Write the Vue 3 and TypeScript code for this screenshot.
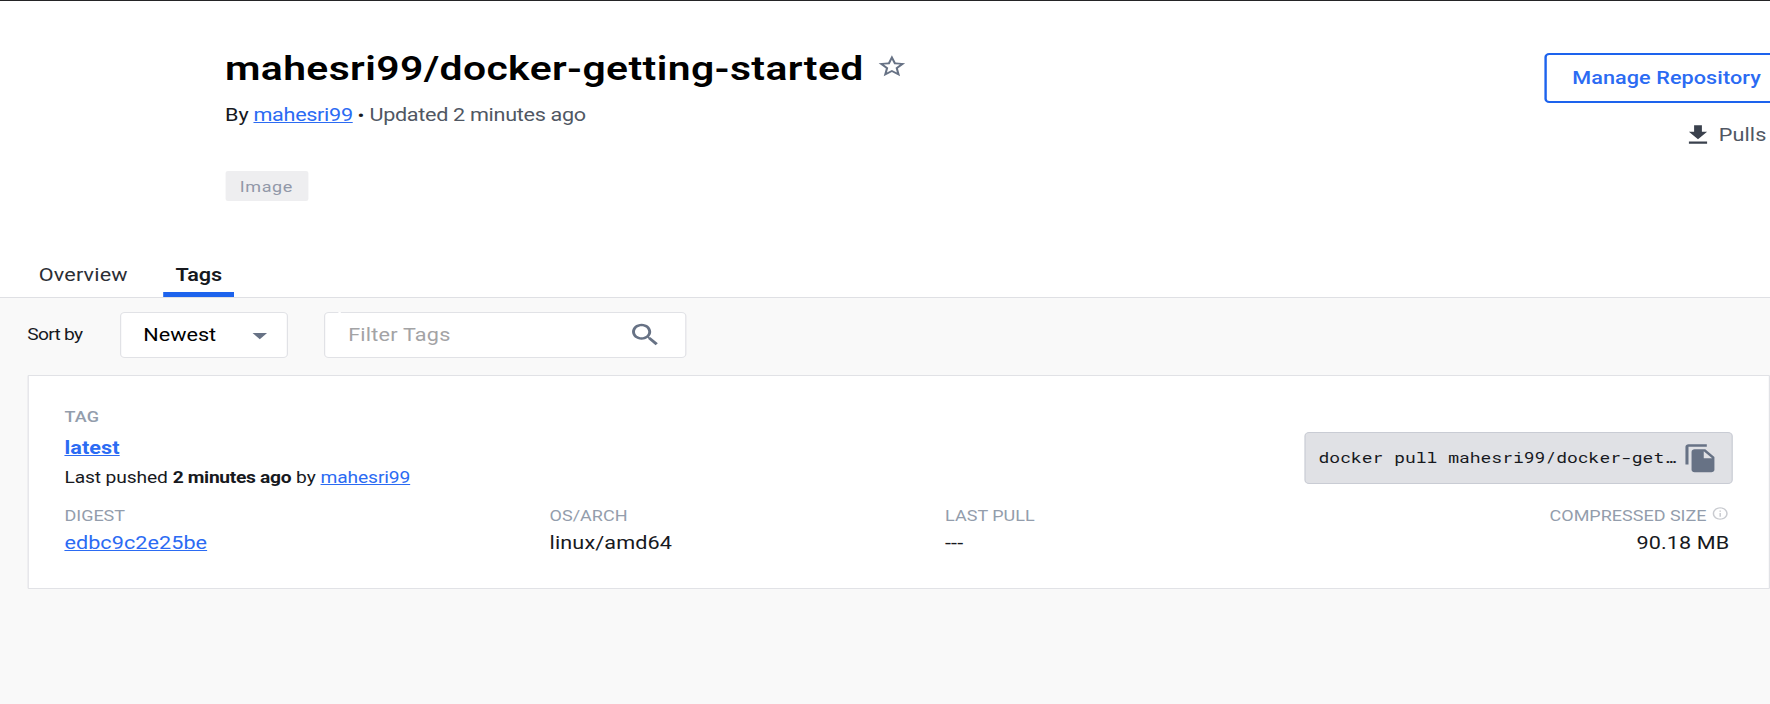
<script setup lang="ts">
interface Repository {
  name: string
  owner: string
  updated: string
  kind: string
}

interface TagEntry {
  name: string
  pushed: string
  by: string
  digest: string
  arch: string
  lastPull: string
  size: string
  command: string
}

const repo: Repository = {
  name: 'mahesri99/docker-getting-started',
  owner: 'mahesri99',
  updated: 'Updated 2 minutes ago',
  kind: 'Image',
}

const tag: TagEntry = {
  name: 'latest',
  pushed: '2 minutes ago',
  by: 'mahesri99',
  digest: 'edbc9c2e25be',
  arch: 'linux/amd64',
  lastPull: '---',
  size: '90.18 MB',
  command: 'docker pull mahesri99/docker-get…',
}
</script>

<template>
  <div class="page">
    <header class="header">
      <div class="summary">
        <div class="title-row">
          <h1 class="title">{{ repo.name }}</h1>
          <svg class="star" viewBox="0 0 24 24"><path d="M22 9.24l-7.19-.62L12 2 9.19 8.63 2 9.24l5.46 4.73L5.82 21 12 17.27 18.18 21l-1.63-7.03L22 9.24zM12 15.4l-3.76 2.27 1-4.28-3.32-2.88 4.38-.38L12 6.1l1.71 4.04 4.38.38-3.32 2.88 1 4.28L12 15.4z" /></svg>
        </div>
        <div class="byline">
          <span class="by">By</span><a class="link owner">{{ repo.owner }}</a><span class="dot">•</span><span class="updated">{{ repo.updated }}</span>
        </div>
        <span class="badge">{{ repo.kind }}</span>
      </div>
      <div class="actions">
        <button class="manage">Manage Repository</button>
        <div class="pulls">
          <svg class="download" viewBox="0 0 24 24"><path d="M19 9h-4V3H9v6H5l7 7 7-7zM5 18v2h14v-2H5z" /></svg>
          <span>Pulls</span>
        </div>
      </div>
    </header>

    <nav class="tabs">
      <a class="tab overview">Overview</a>
      <a class="tab active">Tags</a>
    </nav>

    <main class="main">
      <div class="toolbar">
        <span class="sort-label">Sort by</span>
        <div class="select">
          <span>Newest</span>
          <svg class="caret" viewBox="0 0 24 24"><path d="M7 10l5 5 5-5z" /></svg>
        </div>
        <div class="filter">
          <span class="placeholder">Filter Tags</span>
          <svg class="search" viewBox="0 0 24 24"><path d="M15.5 14h-.79l-.28-.27C15.41 12.59 16 11.11 16 9.5 16 5.91 13.09 3 9.5 3S3 5.91 3 9.5 5.91 16 9.5 16c1.61 0 3.09-.59 4.23-1.57l.27.28v.79l5 4.99L20.49 19l-4.99-5zm-6 0C7.01 14 5 11.99 5 9.5S7.01 5 9.5 5 14 7.01 14 9.5 11.99 14 9.5 14z" /></svg>
        </div>
      </div>

      <section class="card">
        <div class="card-top">
          <div class="tag-info">
            <div class="label tag-label">TAG</div>
            <a class="link tag-name">{{ tag.name }}</a>
            <div class="pushed">
              <span class="pushed-text">Last pushed</span>
              <b class="when">{{ tag.pushed }}</b>
              <span class="pushed-by">by</span>
              <a class="link pusher">{{ tag.by }}</a>
            </div>
          </div>
          <div class="command">
            <code class="code">{{ tag.command }}</code>
            <svg class="copy" viewBox="0 0 24 24"><path d="M16 1H4c-1.1 0-2 .9-2 2v14h2V3h12V1zm-1 4l6 6v10c0 1.1-.9 2-2 2H7.99C6.89 23 6 22.1 6 21V7c0-1.1.89-2 1.99-2H15zm-1 7h5.5L14 6.5V12z" /></svg>
          </div>
        </div>
        <div class="details">
          <div class="cell">
            <div class="label">DIGEST</div>
            <a class="link value">{{ tag.digest }}</a>
          </div>
          <div class="cell">
            <div class="label">OS/ARCH</div>
            <span class="value arch">{{ tag.arch }}</span>
          </div>
          <div class="cell">
            <div class="label">LAST PULL</div>
            <span class="value">{{ tag.lastPull }}</span>
          </div>
          <div class="cell right">
            <div class="label size-label">
              <span>COMPRESSED SIZE</span>
              <svg class="info" viewBox="0 0 24 24"><path d="M11 7h2v2h-2zm0 4h2v6h-2zm1-9C6.48 2 2 6.48 2 12s4.48 10 10 10 10-4.48 10-10S17.52 2 12 2zm0 18c-4.41 0-8-3.59-8-8s3.59-8 8-8 8 3.59 8 8-3.59 8-8 8z" /></svg>
            </div>
            <span class="value size">{{ tag.size }}</span>
          </div>
        </div>
      </section>
    </main>
  </div>
</template>

<style>
html,
body {
  margin: 0;
  overflow: hidden;
  background: #f9f9f9;
}
</style>

<style scoped>
/* The page is set 1475px wide and widened horizontally by 1.2. */
.page {
  box-sizing: border-box;
  width: 1475px;
  height: 704px;
  overflow: hidden;
  display: flex;
  flex-direction: column;
  transform: scaleX(1.2);
  transform-origin: 0 0;
  background: #fff;
  border-top: 1px solid #242426;
  color: #17191e;
  font: 400 18px/24px Roboto, "Liberation Sans", sans-serif;
  white-space: nowrap;
}
.page * {
  box-sizing: border-box;
}
svg {
  display: block;
  flex: none;
  fill: #677285;
}
.link {
  color: #2b6bf3;
  text-decoration: underline;
  text-decoration-thickness: 1px;
  text-underline-offset: 1px;
  text-decoration-skip-ink: none;
}
.header {
  display: flex;
  justify-content: space-between;
  height: 262px;
  padding-left: 187.5px;
}
.summary {
  padding-top: 47px;
}
.title-row {
  display: flex;
  height: 40px;
}
.title {
  margin: 0;
  color: #000;
  font-size: 34px;
  line-height: 40px;
  font-weight: 600;
  letter-spacing: 0.34px;
}
.star {
  width: 26.5px;
  height: 26.5px;
  margin: 5px 0 0 10.2px;
}
.byline {
  display: flex;
  margin-top: 15px;
}
.owner {
  margin-left: 4px;
  letter-spacing: -0.26px;
}
.dot {
  margin: 0 4.2px 0 4px;
  font-size: 17px;
}
.updated {
  color: #505763;
  letter-spacing: -0.26px;
}
.badge {
  display: flex;
  align-items: center;
  justify-content: center;
  width: 69px;
  height: 30px;
  margin-top: 44px;
  padding-top: 1px;
  border-radius: 2px;
  background: #eeeef0;
  color: #9198a8;
  font-size: 15px;
  font-weight: 400;
  letter-spacing: 0.5px;
}
.actions {
  flex: none;
  width: 187.6px;
  padding-top: 52px;
}
.manage {
  display: block;
  width: 207px;
  height: 50px;
  padding: 0 0 0 20.8px;
  border: 2px solid #1d63ed;
  border-radius: 4px;
  background: #fff;
  color: #2b6bf3;
  font: inherit;
  font-weight: 500;
  letter-spacing: 0.07px;
  text-align: left;
}
.pulls {
  display: flex;
  align-items: center;
  margin-top: 19px;
  padding-left: 115px;
  gap: 3.9px;
  color: #505763;
  letter-spacing: 0.08px;
}
.download {
  width: 26px;
  height: 26px;
  fill: #3a414d;
}
.tabs {
  display: flex;
  flex: none;
  height: 35px;
  border-bottom: 1px solid #dfe0e4;
}
.tab {
  height: 34px;
  letter-spacing: 0.14px;
}
.overview {
  margin-left: 32.3px;
  width: 103.9px;
  color: #2b2e35;
}
.active {
  width: 59px;
  border-bottom: 5px solid #1d63ed;
  font-weight: 600;
  letter-spacing: 0;
  text-align: center;
}
.main {
  flex: 1;
  padding: 14px 0 0 22.7px;
  background: #f9f9f9;
}
.toolbar {
  display: flex;
  align-items: center;
  height: 46px;
}
.sort-label {
  width: 77.4px;
  font-size: 16px;
  letter-spacing: -0.6px;
}
.select,
.filter {
  position: relative;
  display: flex;
  align-items: center;
  justify-content: space-between;
  height: 46px;
  border: 1px solid #e1e2e6;
  border-radius: 4px;
  background: #fff;
}
.select {
  width: 139.8px;
  margin-right: 30.5px;
  padding: 0 8px 0 18.4px;
  color: #000;
}
.caret {
  width: 29px;
  height: 29px;
}
.filter {
  width: 302.1px;
  padding: 0 19.3px 0 18.8px;
}
/* legend gap in the outlined field */
.filter::before {
  content: "";
  position: absolute;
  left: 10.5px;
  top: -1px;
  width: 2px;
  height: 1px;
  background: #fff;
}
.placeholder {
  color: #a3a3a5;
  letter-spacing: 0.18px;
}
.search {
  width: 29.5px;
  height: 29.5px;
}
.card {
  width: 1451.9px;
  height: 214px;
  margin-top: 17px;
  padding: 31px 29.9px 0 30px;
  border: 1px solid #e1e2e6;
  border-radius: 1px;
  background: #fff;
}
.card-top {
  display: flex;
  justify-content: space-between;
  height: 99px;
}
.label {
  height: 20px;
  color: #939dac;
  font-size: 15px;
  line-height: 20px;
}
.tag-label {
  font-weight: 500;
  letter-spacing: 0.2px;
}
.tag-name {
  display: block;
  margin-top: 9px;
  font-weight: 700;
  letter-spacing: 0.08px;
}
.pushed {
  display: flex;
  gap: 4.1px;
  margin-top: 8px;
  font-size: 16px;
  line-height: 20px;
  letter-spacing: -0.1px;
}
.when {
  letter-spacing: -0.26px;
}
.command {
  display: flex;
  align-items: center;
  width: 356.5px;
  height: 52px;
  margin-top: 25px;
  padding: 0 10.6px;
  border: 1px solid #c9ccd4;
  border-radius: 4px;
  background: #e0e1e5;
}
.code {
  width: 301px;
  padding-bottom: 3px;
  font: 400 15px/20px "Roboto Mono", "DejaVu Sans Mono", monospace;
  letter-spacing: 0;
}
.copy {
  width: 30.5px;
  height: 30.5px;
  margin: 0 0 0 5.5px;
}
.details {
  display: grid;
  grid-template-columns: 404.3px 329.6px auto 1fr;
}
.value {
  display: block;
  margin-top: 5px;
  letter-spacing: 0.05px;
}
.arch {
  letter-spacing: 0.1px;
}
.right {
  display: flex;
  flex-direction: column;
  align-items: flex-end;
  padding-right: 2.6px;
}
.size-label {
  display: flex;
  gap: 4px;
}
.info {
  width: 15px;
  height: 15px;
  fill: #c9cbd0;
}
.size {
  letter-spacing: 0.1px;
}
</style>
